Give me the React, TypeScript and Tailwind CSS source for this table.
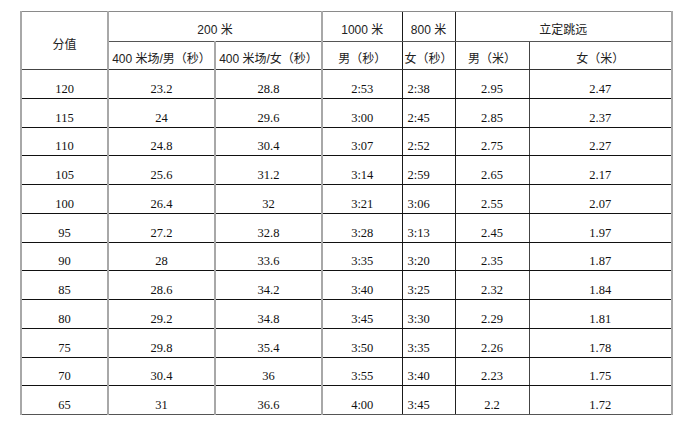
import React from "react";

const rows: (string | number)[][] = [
  [120, "23.2", "28.8", "2:53", "2:38", "2.95", "2.47"],
  [115, "24", "29.6", "3:00", "2:45", "2.85", "2.37"],
  [110, "24.8", "30.4", "3:07", "2:52", "2.75", "2.27"],
  [105, "25.6", "31.2", "3:14", "2:59", "2.65", "2.17"],
  [100, "26.4", "32", "3:21", "3:06", "2.55", "2.07"],
  [95, "27.2", "32.8", "3:28", "3:13", "2.45", "1.97"],
  [90, "28", "33.6", "3:35", "3:20", "2.35", "1.87"],
  [85, "28.6", "34.2", "3:40", "3:25", "2.32", "1.84"],
  [80, "29.2", "34.8", "3:45", "3:30", "2.29", "1.81"],
  [75, "29.8", "35.4", "3:50", "3:35", "2.26", "1.78"],
  [70, "30.4", "36", "3:55", "3:40", "2.23", "1.75"],
  [65, "31", "36.6", "4:00", "3:45", "2.2", "1.72"],
];

const widths = [87, 107, 107, 80, 53, 74, 143];

const leftBorder = [
  "border-l-2 border-l-[#a8a8a8]",
  "border-l-2 border-l-[#a8a8a8]",
  "border-l-2 border-l-[#a8a8a8]",
  "border-l-2 border-l-[#a8a8a8]",
  "border-l border-l-[#1a1a1a]",
  "border-l border-l-[#222]",
  "border-l border-l-[#444]",
];

const align = [
  "text-center",
  "text-center",
  "text-center",
  "text-center",
  "text-left pl-[5px]",
  "text-center",
  "text-center",
];

const head = "font-['Liberation_Sans','Noto_Sans_CJK_SC',sans-serif] text-[12px] leading-[15px] text-[#222] font-normal p-0";

export default function App() {
  return (
    <div className="w-[699px] h-[426px] bg-white pl-[20px] pt-[11px]">
      <table className="table-fixed border-collapse w-[651px]">
        <colgroup>
          {widths.map((w, i) => (
            <col key={i} style={{ width: w }} />
          ))}
        </colgroup>
        <thead>
          <tr className="h-[30px]">
            <th
              rowSpan={2}
              className={`${head} ${leftBorder[0]} border-t border-t-[#8a8a8a] border-b border-b-[#444] align-middle text-center pt-[10px]`}
            >
              分值
            </th>
            <th
              colSpan={2}
              className={`${head} ${leftBorder[1]} border-t border-t-[#8a8a8a] border-b border-b-[#555] align-bottom text-center pb-[3px]`}
            >
              200 米
            </th>
            <th
              className={`${head} ${leftBorder[3]} border-t border-t-[#8a8a8a] border-b border-b-[#555] align-bottom text-center pb-[3px]`}
            >
              1000 米
            </th>
            <th
              className={`${head} ${leftBorder[4]} border-t border-t-[#8a8a8a] border-b border-b-[#555] align-bottom text-center pb-[3px]`}
            >
              800 米
            </th>
            <th
              colSpan={2}
              className={`${head} ${leftBorder[5]} border-r-2 border-r-[#a8a8a8] border-t border-t-[#8a8a8a] border-b border-b-[#555] align-bottom text-center pb-[3px]`}
            >
              立定跳远
            </th>
          </tr>
          <tr className="h-[28px]">
            <th className={`${head} ${leftBorder[1]} border-b border-b-[#333] align-bottom text-center pb-[2px]`}>
              400 米场/男（秒）
            </th>
            <th className={`${head} ${leftBorder[2]} border-b border-b-[#333] align-bottom text-center pb-[2px]`}>
              400 米场/女（秒）
            </th>
            <th className={`${head} ${leftBorder[3]} border-b border-b-[#333] align-bottom text-center pb-[2px]`}>
              男（秒）
            </th>
            <th className={`${head} ${leftBorder[4]} border-b border-b-[#333] align-bottom text-center pb-[2px]`}>
              女（秒）
            </th>
            <th className={`${head} ${leftBorder[5]} border-b border-b-[#333] align-bottom text-center pb-[2px]`}>
              男（米）
            </th>
            <th
              className={`${head} ${leftBorder[6]} border-r-2 border-r-[#a8a8a8] border-b border-b-[#333] align-bottom text-center pb-[2px]`}
            >
              女（米）
            </th>
          </tr>
        </thead>
        <tbody>
          {rows.map((r, ri) => (
            <tr key={ri} className="h-[28.75px]">
              {r.map((v, ci) => (
                <td
                  key={ci}
                  className={`font-['Liberation_Serif',serif] text-[12.5px] leading-[15px] text-[#111] p-0 pb-[1px] align-bottom ${leftBorder[ci]} ${align[ci]} ${
                    ri === rows.length - 1 ? "border-b border-b-[#555]" : "border-b border-b-[#111]"
                  } ${ci === 6 ? "border-r-2 border-r-[#a8a8a8]" : ""}`}
                >
                  {v}
                </td>
              ))}
            </tr>
          ))}
        </tbody>
      </table>
    </div>
  );
}
